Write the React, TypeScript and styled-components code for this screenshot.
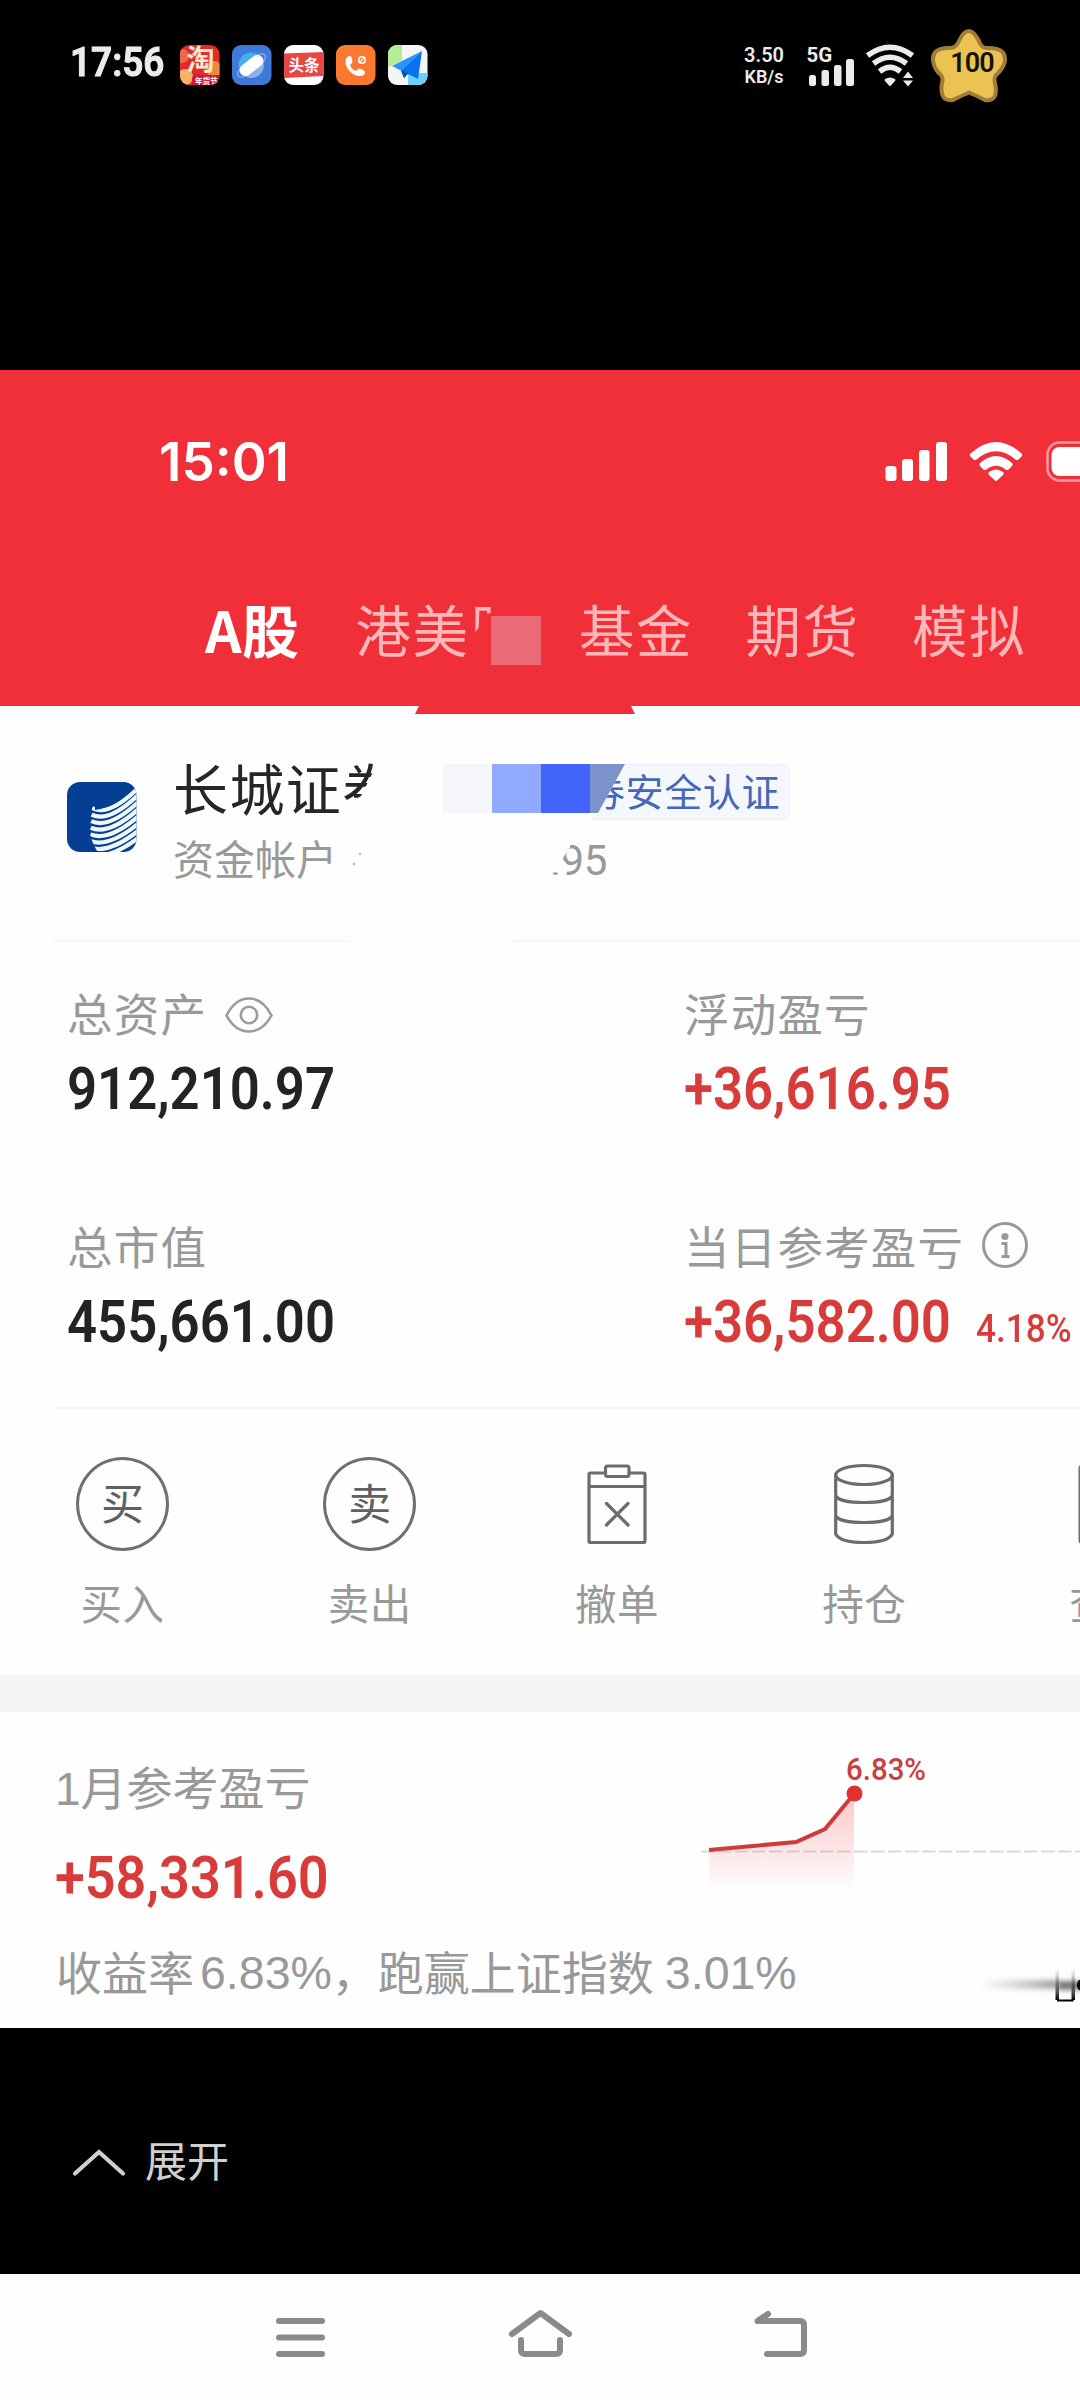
import React from "react";
import styled, { createGlobalStyle } from "styled-components";

const CJK = `"Noto Sans CJK SC", sans-serif`;
const NUM = `Roboto, "Noto Sans CJK SC", sans-serif`;
const HELV = `"Liberation Sans", "Noto Sans CJK SC", sans-serif`;

const GlobalStyle = createGlobalStyle`
  *, *::before, *::after { box-sizing: border-box; }
  body { margin: 0; background: #000; }
  svg { display: block; flex: none; }
`;

const Screen = styled.main`
  width: 1080px;
  height: 2400px;
  display: flex;
  flex-direction: column;
  overflow: hidden;
  background: #000;
  font-family: ${CJK};
  white-space: nowrap;
`;

/* ---------- outer phone status bar ---------- */

const StatusBar = styled.header`
  height: 370px;
  flex: none;
  display: flex;
  align-items: flex-start;
  justify-content: space-between;
  padding: 28px 73px 0 70px;
  color: #ececec;
`;

const StatusGroup = styled.div`
  height: 73px;
  display: flex;
  align-items: center;
  gap: 12px;
`;

const SystemGroup = styled.div`
  height: 73px;
  display: grid;
  grid-template-columns: 64px 59px 66px 76px;
  align-items: center;
`;

const Clock = styled.span`
  width: 98px;
  font: 600 41px/60px ${NUM};
  margin-top: -5px;
  -webkit-text-stroke: 1px #ececec;
`;

const ClockText = styled.span`
  display: inline-block;
  transform: scaleX(0.9);
  transform-origin: 0 50%;
`;

const NetSpeed = styled.div`
  width: 44px;
  display: flex;
  flex-direction: column;
  align-items: center;
  font: 600 20px/22px ${NUM};
`;

const SpeedUnit = styled.span`
  font-size: 18px;
  line-height: 22px;
`;

/* ---------- trading app header ---------- */

const AppHeader = styled.section`
  height: 336px;
  flex: none;
  background: #f12f38;
  color: #fff;
  display: flex;
  flex-direction: column;
`;

const InnerStatus = styled.div`
  display: flex;
  align-items: center;
  height: 60px;
  margin-top: 62px;
  padding-left: 159px;
`;

const InnerClock = styled.span`
  width: 726px;
  font: 600 53px/60px Inter, sans-serif;
`;

const Tabs = styled.nav`
  display: flex;
  align-items: center;
  height: 80px;
  margin-top: 96px;
  padding-left: 205px;
  gap: 52.5px;
`;

const Tab = styled.span<{ $active?: boolean }>`
  display: flex;
  min-width: ${(p) => (p.$active ? 98 : 0)}px;
  font-size: ${(p) => (p.$active ? 57 : 55.5)}px;
  letter-spacing: ${(p) => (p.$active ? 0.5 : 1.5)}px;
  line-height: 80px;
  font-weight: ${(p) => (p.$active ? 700 : 400)};
  color: ${(p) => (p.$active ? "#fff" : "#ffb7ba")};
`;

const HiddenGlyph = styled.span`
  position: relative;
`;

const GlyphRemnant = styled.span`
  display: block;
  clip-path: polygon(0 0, 22px 0, 21px 25px, 10px 28px, 9px 40px, 4px 46px, 0 46px);
`;

const TabMosaic = styled.span`
  position: absolute;
  left: 21px;
  top: 28px;
  width: 50px;
  height: 49px;
  background: #e96b78;
`;

/* ---------- white body ---------- */

const Body = styled.section`
  height: 1322px;
  flex: none;
  background: #fefefe;
  display: flex;
  flex-direction: column;
  overflow: hidden;
`;

const Account = styled.div`
  position: relative;
  height: 234px;
  flex: none;
  display: flex;
  align-items: flex-start;
  padding: 50px 0 0 67px;
`;

const Notch = styled.div`
  position: absolute;
  left: 415px;
  top: 0;
  width: 220px;
  height: 8px;
  background: #f12f38;
  clip-path: polygon(4px 0, 216px 0, 100% 100%, 0 100%);
`;

const BrokerLogo = styled.svg`
  margin-top: 26px;
`;

const AccountText = styled.div`
  margin-left: 36px;
  display: flex;
  flex-direction: column;
  gap: 16px;
`;

const TitleRow = styled.div`
  display: flex;
  height: 60px;
`;

const BrokerName = styled.span`
  width: 270px;
  font-size: 55px;
  letter-spacing: 1.4px;
  line-height: 60px;
  color: #262626;
  clip-path: polygon(0 0, 202px 0, 202px 12px, 188px 40px, 170px 52px, 170px 100%, 0 100%);
`;

const MosaicCell = styled.span<{ $color: string }>`
  width: 49px;
  height: 49px;
  margin-top: 8px;
  background: ${(p) => p.$color};
`;

const TagWrap = styled.div`
  position: relative;
  width: 200px;
  height: 56px;
  margin-top: 8px;
`;

const Tag = styled.div`
  height: 56px;
  border: 1px solid #e9f1fc;
  border-radius: 0 9px 9px 0;
  background: #f4f8fe;
  color: #4666b9;
  font-size: 38px;
  letter-spacing: 0.6px;
  line-height: 50px;
  text-indent: -4px;
  clip-path: polygon(35px 0, 100% 0, 100% 100%, 0 100%, 8px 49px);
`;

const TagWedge = styled.span`
  position: absolute;
  left: 0;
  top: 0;
  width: 35px;
  height: 49px;
  background: #7c92cb;
  clip-path: polygon(0 0, 100% 0, 8px 100%, 0 100%);
`;

const AccountNo = styled.div`
  display: flex;
  align-items: center;
  height: 50px;
  font-size: 41px;
  line-height: 50px;
  color: #999;
`;

const NumberSpecks = styled.svg`
  margin-left: 12px;
`;

const NumberTail = styled.span`
  margin: 7px 0 0 187px;
  font: 400 42px/50px ${NUM};
  letter-spacing: -0.5px;
  clip-path: polygon(0 37px, 10px 37px, 16px 27px, 12px 24px, 20px 12px, 20px 0, 100% 0, 100% 100%, 0 100%);
`;

const Divider = styled.div<{ $gap?: boolean }>`
  height: 2px;
  flex: none;
  margin-left: 54px;
  background: ${(p) =>
    p.$gap
      ? "linear-gradient(90deg, #f5f5f5 290px, #fefefe 300px, #fefefe 450px, #f5f5f5 462px)"
      : "#f4f4f4"};
`;

const Metrics = styled.div`
  height: 465px;
  flex: none;
  display: grid;
  grid-template-columns: 617px 1fr;
  grid-auto-rows: 137px;
  row-gap: 96px;
  padding: 40px 0 0 67px;
`;

const Metric = styled.div`
  display: flex;
  flex-direction: column;
  gap: 17px;
`;

const Label = styled.div`
  display: flex;
  align-items: center;
  font-size: 45.5px;
  letter-spacing: 1.2px;
  line-height: 60px;
  height: 60px;
  color: #999;
`;

const LabelIcon = styled.span<{ $left: number; $drop?: number }>`
  margin-left: ${(p) => p.$left}px;
  padding-top: ${(p) => p.$drop ?? 0}px;
`;

const Amount = styled.div<{ $tone?: "up"; $size?: number }>`
  display: flex;
  align-items: baseline;
  width: max-content;
  height: 60px;
  font: 600 ${(p) => p.$size ?? 58.5}px/60px ${NUM};
  color: ${(p) => (p.$tone ? "#d73c3a" : "#222424")};
  transform: scaleX(0.9);
  transform-origin: 0 50%;
`;

const Percent = styled.span`
  margin-left: 28px;
  font-size: 39px;
  font-weight: 500;
`;

const Actions = styled.nav`
  height: 266px;
  flex: none;
  display: grid;
  grid-template-columns: repeat(5, 247.2px);
  margin-left: -1px;
  padding-top: 49px;
`;

const Action = styled.div`
  display: flex;
  flex-direction: column;
  align-items: center;
  gap: 27px;
  font-size: 41.5px;
  letter-spacing: 0.5px;
  line-height: 50px;
  color: #999;
`;

const IconSlot = styled.div`
  height: 92px;
  display: flex;
  align-items: center;
`;

const RoundGlyph = styled.span`
  width: 93px;
  height: 94px;
  border: 3px solid #707070;
  border-radius: 50%;
  font-size: 43px;
  letter-spacing: 0;
  line-height: 82px;
  text-align: center;
  color: #606060;
`;

const Band = styled.div`
  height: 37px;
  flex: none;
  background: #f5f5f5;
`;

const MonthTop = styled.div`
  display: flex;
  height: 195px;
  flex: none;
  padding-left: 55px;
`;

const MonthFigures = styled.div`
  width: 635px;
  padding-top: 47px;
  display: flex;
  flex-direction: column;
  gap: 29px;
`;

const MonthLabel = styled.div`
  height: 60px;
  font: 400 46px/60px ${HELV};
  color: #999;
`;

const Summary = styled.div`
  display: flex;
  align-items: center;
  height: 60px;
  margin-top: 33px;
  padding-left: 56px;
  font-size: 46px;
  line-height: 60px;
  color: #999;
`;

const Figure = styled.span<{ $left: number }>`
  font: 400 46.5px/60px ${HELV};
  margin: 5px 0 0 ${(p) => p.$left}px;
`;

const Smudge = styled.svg`
  margin-left: auto;
`;

/* ---------- bottom ---------- */

const ExpandBar = styled.footer`
  height: 246px;
  flex: none;
  display: flex;
  align-items: flex-start;
  padding: 102px 0 0 71px;
  gap: 18px;
  font-size: 42px;
  line-height: 58px;
  color: #d0d0d0;
`;

const Chevron = styled.svg`
  margin-top: 18px;
`;

const NavBar = styled.nav`
  height: 126px;
  flex: none;
  display: flex;
  align-items: center;
  justify-content: space-between;
  padding: 0 270px;
  background: #fefefe;
`;

/* ---------- drawings ---------- */

const AppIcons = () => (
  <>
    <svg width="40" height="40" viewBox="0 0 40 40">
      <defs>
        <clipPath id="r1"><rect width="39.5" height="40" rx="9" /></clipPath>
      </defs>
      <g clipPath="url(#r1)">
        <rect width="40" height="40" fill="#e22a2c" />
        <circle cx="2" cy="11" r="7" fill="#f0684a" />
        <circle cx="5" cy="32" r="8" fill="#f5b26b" />
        <circle cx="34" cy="24" r="8" fill="#f28a3c" />
        <text x="6.500" y="25" fontFamily={CJK} fontWeight="700" fontSize="28" fill="#fde9cf">淘</text>
        <path d="M12 40V34q0-4 4-4H40V40Z" fill="#d3163c" />
        <text x="15" y="38.500" fontFamily={CJK} fontWeight="700" fontSize="7.500" fill="#fff">年货节</text>
      </g>
    </svg>
    <svg width="40" height="40" viewBox="0 0 40 40">
      <rect width="39.500" height="40" rx="9" fill="#3f7ad8" />
      <circle cx="19" cy="20" r="12.500" fill="#45b0ec" />
      <path d="M30.500 15a12.500 12.500 0 0 1-18 16Z" fill="#8db0f0" />
      <ellipse cx="19.500" cy="20.500" rx="17" ry="6" transform="rotate(-38 19.500 20.500)" fill="none" stroke="#7ba6f3" strokeWidth="1.500" />
      <rect x="6" y="14.500" width="27" height="12" rx="6" transform="rotate(-38 19.500 20.500)" fill="#fff" />
    </svg>
    <svg width="40" height="40" viewBox="0 0 40 40">
      <rect width="39.500" height="40" rx="9" fill="#fff" />
      <path d="M0 8.500L39.500 7V31L0 33Z" fill="#e84545" />
      <text x="4.500" y="26" fontFamily={CJK} fontWeight="700" fontSize="15.500" fill="#fff">头条</text>
    </svg>
    <svg width="40" height="40" viewBox="0 0 40 40">
      <rect width="39.500" height="40" rx="9" fill="#fb7831" />
      <path d="M14 11c2 0 3 6 2 7l-2 2c1 3 3 5 6 6l2-2c1-1 7 1 7 3 0 3-3 4-5 4C16 31 9 23 9.500 16c0-3 2-5 4.500-5Z" fill="#fff" />
      <circle cx="26" cy="15" r="3.300" fill="none" stroke="#fff" strokeWidth="1.600" />
      <path d="M24 17l4-4" stroke="#fff" strokeWidth="1.300" />
    </svg>
    <svg width="40" height="40" viewBox="0 0 40 40">
      <defs>
        <clipPath id="r5"><rect width="39.500" height="40" rx="9" /></clipPath>
      </defs>
      <g clipPath="url(#r5)">
        <rect width="40" height="40" fill="#f3f6f5" />
        <path d="M0 0H14V16L0 22Z" fill="#b4ec98" />
        <path d="M20 28L40 28V40H20Z" fill="#6cd0fb" />
        <path d="M34 6L4 21l9 4.500Z" fill="#2b93fb" />
        <path d="M34 6L13 25.500l3 7.500 4-4 10 5Z" fill="#0a72ee" />
        <path d="M13 25.500L16 33l4-5Z" fill="#0551b8" />
      </g>
    </svg>
  </>
);

const OuterSignal = () => (
  <svg width="50" height="73" viewBox="0 0 50 73">
    <text x="0.500" y="31.500" fontFamily={NUM} fontWeight="700" fontSize="20.500" fill="#ececec">5G</text>
    <g fill="#ececec">
      <rect x="3" y="45" width="7" height="11" rx="2.500" />
      <rect x="15.500" y="40" width="7.500" height="16" rx="2.500" />
      <rect x="28" y="35" width="7.500" height="21" rx="2.500" />
      <rect x="40" y="29" width="8" height="27" rx="2.500" />
    </g>
  </svg>
);

const OuterWifi = () => (
  <svg width="50" height="73" viewBox="0 0 50 73">
    <g fill="none" stroke="#ececec" strokeWidth="5.500">
      <path d="M2.500 25.500Q25 9 47.500 25.500" />
      <path d="M8.500 33.500Q25 21 41.500 33.500" />
      <path d="M14.500 41.500Q25 33 35.500 41.500" />
    </g>
    <path d="M20 49q5-3 10 0q1 1 0 2l-4 4.500q-1 1-2 0l-4-4.500q-1-1 0-2Z" fill="#ececec" />
    <path d="M38 48l5-6.500 5 6.500ZM38 50.500l5 6 5-6Z" fill="#ececec" />
  </svg>
);

const StarBattery = () => (
  <svg width="76" height="76" viewBox="0 0 76 76">
    <path
      d="M28 13Q37.500-7 48 13Q50 19.500 55 20Q77 19 73.500 35Q71 42 65 47Q62.500 50 64 55Q68 74 54 72Q44 67 38 64.500Q32 67 22 72Q8 74 11 55Q12.500 50 10 47Q4 42 2.500 35Q-1 19 20 20Q25 19.500 28 13Z"
      fill="#ebc352"
      stroke="#a37c3a"
      strokeWidth="4"
    />
    <text x="41" y="43.500" textAnchor="middle" fontFamily={NUM} fontWeight="600" fontSize="27" letterSpacing="-1" fill="#15120a">100</text>
  </svg>
);

const InnerIcons = () => (
  <svg width="195" height="60" viewBox="885 432 195 60">
    <g fill="#fff">
      <rect x="885.500" y="466" width="11" height="15" rx="3" />
      <rect x="902" y="459" width="11" height="22" rx="3" />
      <rect x="919" y="450" width="10.500" height="31" rx="3" />
      <rect x="936" y="442" width="11" height="39" rx="3" />
      <path d="M970.500 453.500Q996 430.500 1021.500 453.500q1.500 1.500 0 3l-3 3q-1.500 1.500-3 0Q996 443 976.500 459.500q-1.500 1.500-3 0l-3-3q-1.500-1.500 0-3Z" />
      <path d="M980 463Q996 449 1012 463q1.500 1.500 0 3l-3.500 3.500q-1.500 1.200-3 0Q996 462 986.500 469.500q-1.500 1.200-3 0L980 466q-1.500-1.500 0-3Z" />
      <path d="M989 472q7-5 14 0q1.500 1.200 0 3l-6 5.500q-1 1-2 0l-6-5.500q-1.500-1.800 0-3Z" />
      <rect x="1051.500" y="447" width="60" height="29" rx="8" />
    </g>
    <rect x="1047.500" y="442.500" width="80" height="38" rx="12" fill="none" stroke="#f99a9e" strokeWidth="2.500" />
  </svg>
);

const stripes = [0, 1, 2, 3, 4, 5, 6, 7];

const GreatWallLogo = () => (
  <BrokerLogo width="70" height="70" viewBox="0 0 70 70">
    <defs>
      <clipPath id="logo"><rect width="69.500" height="70" rx="13" /></clipPath>
      <clipPath id="wing">
        <path d="M28 19C24 28 21 37 22 46C23 56 27 64 32 72H72V2C60 14 48 25 28 28Z" />
      </clipPath>
    </defs>
    <g clipPath="url(#logo)">
      <rect width="70" height="70" fill="#053f94" />
      <g clipPath="url(#wing)" fill="none" stroke="#eef8fd" strokeWidth="4.200">
        {stripes.map((i) => (
          <path key={i} d={`M${25 - i * 0.4} ${26 + i * 6.6}Q${42} ${35 + i * 6.2} 72 ${5 + i * 7.2}`} />
        ))}
      </g>
    </g>
  </BrokerLogo>
);

const EyeIcon = () => (
  <svg width="48" height="38" viewBox="0 0 48 38" fill="none" stroke="#9c9c9c" strokeWidth="2.600">
    <path d="M1.500 19.500Q10 2.500 24 2.500T46.500 19.500Q38 35.500 24 35.500T1.500 19.500Z" />
    <circle cx="24" cy="19" r="8.200" />
  </svg>
);

const InfoIcon = () => (
  <svg width="48" height="48" viewBox="0 0 48 48" fill="none" stroke="#999" strokeWidth="3">
    <circle cx="24" cy="24" r="21.500" />
    <circle cx="24" cy="15.500" r="3.600" fill="#999" stroke="none" />
    <path d="M20.500 22.500H25V34.500M20.500 35.500H28.500" />
  </svg>
);

const ClipboardIcon = () => (
  <svg width="60" height="92" viewBox="0 0 60 92" fill="none" stroke="#6c6c6c" strokeWidth="3.200">
    <path d="M17 15H3.500Q2 15 2 16.500V83Q2 84.500 3.500 84.500H56.500Q58 84.500 58 83V16.500Q58 15 56.500 15H43" />
    <rect x="18.500" y="8" width="23.500" height="10.500" rx="2" />
    <path d="M2 28.500H58" />
    <path d="M19.500 45.500L41 67M41 45.500L19.500 67" strokeLinecap="round" />
  </svg>
);

const StackIcon = () => (
  <svg width="60" height="92" viewBox="0 0 60 92" fill="none" stroke="#6c6c6c" strokeWidth="3.200">
    <ellipse cx="30" cy="17" rx="28.300" ry="9.500" />
    <path d="M1.700 17V76Q6 84.500 30 84.500T58.300 76V17" />
    <path d="M1.700 38Q6 44.500 30 44.500T58.300 38M1.700 58Q6 64.500 30 64.500T58.300 58" />
  </svg>
);

const SheetIcon = () => (
  <svg width="66" height="92" viewBox="0 0 66 92" fill="none" stroke="#707070" strokeWidth="3">
    <rect x="2" y="8" width="62.500" height="76.500" rx="2" />
  </svg>
);

const ReturnChart = () => (
  <svg width="390" height="195" viewBox="690 1712 390 195">
    <defs>
      <linearGradient id="fade" x1="0" y1="1793" x2="0" y2="1892" gradientUnits="userSpaceOnUse">
        <stop offset="0" stopColor="#f2424a" stopOpacity="0.300" />
        <stop offset="1" stopColor="#f2424a" stopOpacity="0" />
      </linearGradient>
    </defs>
    <path d="M701 1851.500H1080" stroke="#dadada" strokeWidth="2" strokeDasharray="13.500 3.500" />
    <path d="M709 1850L796 1842L825 1829L854 1794V1892H709Z" fill="url(#fade)" />
    <path d="M709 1850L796 1842L825 1829L854 1794" fill="none" stroke="#cc3c3c" strokeWidth="4" />
    <circle cx="854.500" cy="1793.500" r="8" fill="#e22f30" />
    <g transform="translate(846 1780) scale(0.920 1)">
      <text fontFamily={NUM} fontWeight="500" fontSize="32" fill="#c9403f">6.83%</text>
    </g>
  </svg>
);

const EdgeSmudge = () => (
  <Smudge width="100" height="64" viewBox="980 1938 100 64">
    <defs>
      <linearGradient id="sm" x1="0" x2="1"><stop offset="0" stopColor="#999" stopOpacity="0" /><stop offset="1" stopColor="#777" stopOpacity="0.700" /></linearGradient>
      <linearGradient id="sv" x1="0" y1="0" x2="0" y2="1"><stop offset="0" stopColor="#777" stopOpacity="0" /><stop offset="1" stopColor="#000" /></linearGradient>
      <filter id="soft" x="-20%" y="-100%" width="140%" height="300%"><feGaussianBlur stdDeviation="2.500" /></filter>
    </defs>
    <rect x="980" y="1980" width="78" height="9" fill="url(#sm)" filter="url(#soft)" />
    <rect x="1058" y="1981" width="24" height="9" fill="#777" filter="url(#soft)" />
    <rect x="1055.500" y="1968" width="3.500" height="32" fill="url(#sv)" />
    <rect x="1071.500" y="1968" width="3.500" height="32" fill="url(#sv)" />
    <path d="M1057 2000.500H1073.500" stroke="#000" strokeWidth="2" />
    <ellipse cx="1081" cy="1985" rx="4" ry="5.500" fill="#000" />
  </Smudge>
);

export default function App() {
  return (
    <Screen>
      <GlobalStyle />
      <StatusBar>
        <StatusGroup>
          <Clock><ClockText>17:56</ClockText></Clock>
          <AppIcons />
        </StatusGroup>
        <SystemGroup>
          <NetSpeed>
            <span>3.50</span>
            <SpeedUnit>KB/s</SpeedUnit>
          </NetSpeed>
          <OuterSignal />
          <OuterWifi />
          <StarBattery />
        </SystemGroup>
      </StatusBar>

      <AppHeader>
        <InnerStatus>
          <InnerClock>15:01</InnerClock>
          <InnerIcons />
        </InnerStatus>
        <Tabs>
          <Tab $active>A股</Tab>
          <Tab>
            港美
            <HiddenGlyph>
              <GlyphRemnant>股</GlyphRemnant>
              <TabMosaic />
            </HiddenGlyph>
          </Tab>
          <Tab>基金</Tab>
          <Tab>期货</Tab>
          <Tab>模拟</Tab>
        </Tabs>
      </AppHeader>

      <Body>
        <Account>
          <Notch />
          <GreatWallLogo />
          <AccountText>
            <TitleRow>
              <BrokerName>长城证券</BrokerName>
              <MosaicCell $color="#f5f6fa" />
              <MosaicCell $color="#91aaff" />
              <MosaicCell $color="#4264fb" />
              <TagWrap>
                <Tag>券安全认证</Tag>
                <TagWedge />
              </TagWrap>
            </TitleRow>
            <AccountNo>
              资金帐户
              <NumberSpecks width="14" height="20" viewBox="0 0 14 20" fill="#bbb">
                <circle cx="11" cy="7" r="1.300" />
                <circle cx="5" cy="17" r="1.300" />
              </NumberSpecks>
              <NumberTail>.95</NumberTail>
            </AccountNo>
          </AccountText>
        </Account>
        <Divider $gap />

        <Metrics>
          <Metric>
            <Label>
              总资产
              <LabelIcon $left={18} $drop={6}><EyeIcon /></LabelIcon>
            </Label>
            <Amount>912,210.97</Amount>
          </Metric>
          <Metric>
            <Label>浮动盈亏</Label>
            <Amount $tone="up">+36,616.95</Amount>
          </Metric>
          <Metric>
            <Label>总市值</Label>
            <Amount>455,661.00</Amount>
          </Metric>
          <Metric>
            <Label>
              当日参考盈亏
              <LabelIcon $left={17}><InfoIcon /></LabelIcon>
            </Label>
            <Amount $tone="up">
              +36,582.00
              <Percent>4.18%</Percent>
            </Amount>
          </Metric>
        </Metrics>
        <Divider />

        <Actions>
          <Action>
            <IconSlot><RoundGlyph>买</RoundGlyph></IconSlot>
            买入
          </Action>
          <Action>
            <IconSlot><RoundGlyph>卖</RoundGlyph></IconSlot>
            卖出
          </Action>
          <Action>
            <IconSlot><ClipboardIcon /></IconSlot>
            撤单
          </Action>
          <Action>
            <IconSlot><StackIcon /></IconSlot>
            持仓
          </Action>
          <Action>
            <IconSlot><SheetIcon /></IconSlot>
            查询
          </Action>
        </Actions>
        <Band />

        <MonthTop>
          <MonthFigures>
            <MonthLabel>1月参考盈亏</MonthLabel>
            <Amount $tone="up" $size={60}>+58,331.60</Amount>
          </MonthFigures>
          <ReturnChart />
        </MonthTop>
        <Summary>
          收益率
          <Figure $left={6}>6.83%</Figure>
          ，跑赢上证指数
          <Figure $left={11}>3.01%</Figure>
          <EdgeSmudge />
        </Summary>
      </Body>

      <ExpandBar>
        <Chevron width="56" height="30" viewBox="0 0 56 30" fill="none" stroke="#d0d0d0" strokeWidth="4.200" strokeLinecap="round">
          <path d="M4 25.500L28 4L52 25.500" />
        </Chevron>
        展开
      </ExpandBar>

      <NavBar>
        <svg width="60" height="60" viewBox="270 2307 60 60">
          <path d="M279 2321H322M279 2337.500H322M279 2354H322" stroke="#8a8a8a" strokeWidth="6" strokeLinecap="round" />
        </svg>
        <svg width="66" height="60" viewBox="507 2307 66 60" fill="none" stroke="#8a8a8a" strokeWidth="6" strokeLinecap="round" strokeLinejoin="round">
          <path d="M512 2334L540.500 2313L569 2334" />
          <path d="M521 2340V2350Q521 2354 525 2354H556Q560 2354 560 2350V2340" />
        </svg>
        <svg width="60" height="60" viewBox="750 2307 60 60" fill="none" stroke="#8a8a8a" strokeWidth="6" strokeLinecap="round" strokeLinejoin="round">
          <path d="M767 2354H800Q804 2354 804 2350V2325Q804 2321 800 2321H757.500L768 2314" />
        </svg>
      </NavBar>
    </Screen>
  );
}
